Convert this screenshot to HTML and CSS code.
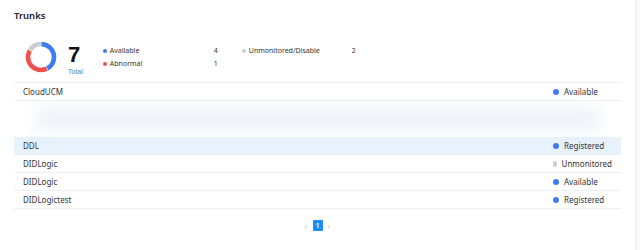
FILE: index.html
```html
<!DOCTYPE html>
<html lang="en">
<head>
    <meta charset="UTF-8">
    <meta name="viewport" content="width=device-width, initial-scale=1.0">
    <title>Trunks</title>
    <link rel="stylesheet" href="styles.css">
</head>
<body>
    <div class="card">
        <h1 class="title">Trunks</h1>

        <div class="summary">
            <svg class="donut" width="32" height="32" viewBox="0 0 32 32">
                <g transform="rotate(-90 16 16)" fill="none" stroke-width="4.6">
                    <circle cx="16" cy="16" r="13" stroke="#3b7df0" stroke-dasharray="33.6 81.7" stroke-dashoffset="-0.5"></circle>
                    <circle cx="16" cy="16" r="13" stroke="#f0514e" stroke-dasharray="32.9 81.7" stroke-dashoffset="-34.7"></circle>
                    <circle cx="16" cy="16" r="13" stroke="#c9cdd3" stroke-dasharray="12.9 81.7" stroke-dashoffset="-68.3"></circle>
                </g>
            </svg>

            <div class="total">
                <div class="total-num">7</div>
                <div class="total-label">Total</div>
            </div>

            <div class="legend">
                <div class="legend-item"><span class="dot blue"></span>Available</div>
                <div class="legend-num">4</div>
                <div class="legend-item"><span class="dot gray"></span>Unmonitored/Disable</div>
                <div class="legend-num">2</div>
                <div class="legend-item"><span class="dot red"></span>Abnormal</div>
                <div class="legend-num">1</div>
            </div>
        </div>

        <div class="table">
            <div class="row">
                <span class="name">CloudUCM</span>
                <span class="status"><span class="dot blue"></span>Available</span>
            </div>

            <div class="ghost"><div class="ghost-blur"></div></div>

            <div class="row active">
                <span class="name">DDL</span>
                <span class="status"><span class="dot blue"></span>Registered</span>
            </div>
            <div class="row">
                <span class="name">DIDLogic</span>
                <span class="status"><span class="dot gray"></span>Unmonitored</span>
            </div>
            <div class="row">
                <span class="name">DIDLogic</span>
                <span class="status"><span class="dot blue"></span>Available</span>
            </div>
            <div class="row">
                <span class="name">DIDLogictest</span>
                <span class="status"><span class="dot blue"></span>Registered</span>
            </div>
        </div>

        <div class="pager">
            <span class="arrow">&lsaquo;</span>
            <span class="page current">1</span>
            <span class="arrow">&rsaquo;</span>
        </div>
    </div>
</body>
</html>
```

FILE: styles.css
```css
* {
    box-sizing: border-box;
    font-family: "Noto Sans", "Open Sans", sans-serif;
}

body {
    margin: 0;
    background-color: #f7f8fa;
    color: #2b2b2b;
}

.card {
    width: 636px;
    height: 250px;
    background: #fff;
    border-right: 1px solid #eceef2;
    padding: 0 14px;
}

.title {
    margin: 0;
    padding-top: 10px;
    font-size: 9.5px;
    line-height: 12px;
    font-weight: 600;
    color: #222;
}

.summary {
    display: flex;
    align-items: center;
    height: 60px;
    padding-top: 10px;
}

.donut {
    margin-left: 11px;
    display: block;
}

.total {
    align-self: flex-start;
    margin-left: 11px;
    margin-top: 13px;
}

.total-num {
    font-family: "Liberation Sans", Arial, sans-serif;
    font-size: 22px;
    font-weight: bold;
    line-height: 20px;
    color: #111;
}

.total-label {
    font-family: "Liberation Sans", Arial, sans-serif;
    font-size: 7px;
    line-height: 9px;
    margin-top: 2px;
    color: #4e8a9b;
}

.legend {
    display: grid;
    grid-template-columns: 111px 28px 110px 20px;
    grid-auto-rows: 13px;
    align-items: center;
    margin-left: 20px;
    font-size: 7px;
    color: #333;
}

.legend-item {
    display: flex;
    align-items: center;
}

.dot {
    display: inline-block;
    width: 4px;
    height: 4px;
    border-radius: 50%;
    margin-right: 3px;
}

.dot.blue {
    background: #3b7df0;
}

.dot.red {
    background: #f0514e;
}

.dot.gray {
    background: #c9cdd3;
}

.table {
    border-top: 1px solid #eceef2;
    font-size: 8px;
    color: #333;
}

.row {
    display: flex;
    justify-content: space-between;
    align-items: center;
    height: 18px;
    padding: 0 9px;
    border-bottom: 1px solid #eceef2;
}

.row.active {
    background: #e8f2fd;
}

.status {
    display: flex;
    align-items: center;
    width: 59px;
}

.status .dot {
    width: 6px;
    height: 6px;
    margin-right: 5px;
}

.ghost {
    height: 36px;
    padding: 8px 22px 0;
}

.ghost-blur {
    height: 20px;
    background: #edf1f7;
    filter: blur(8px);
}

.pager {
    display: flex;
    justify-content: center;
    align-items: center;
    gap: 5px;
    margin-top: 11px;
}

.arrow {
    font-size: 9px;
    color: #c4c8ce;
    line-height: 11px;
}

.page {
    width: 10px;
    height: 11px;
    font-size: 7px;
    line-height: 11px;
    text-align: center;
    border-radius: 1px;
}

.page.current {
    background: #1a8cfb;
    color: #fff;
    font-weight: 600;
}
```
